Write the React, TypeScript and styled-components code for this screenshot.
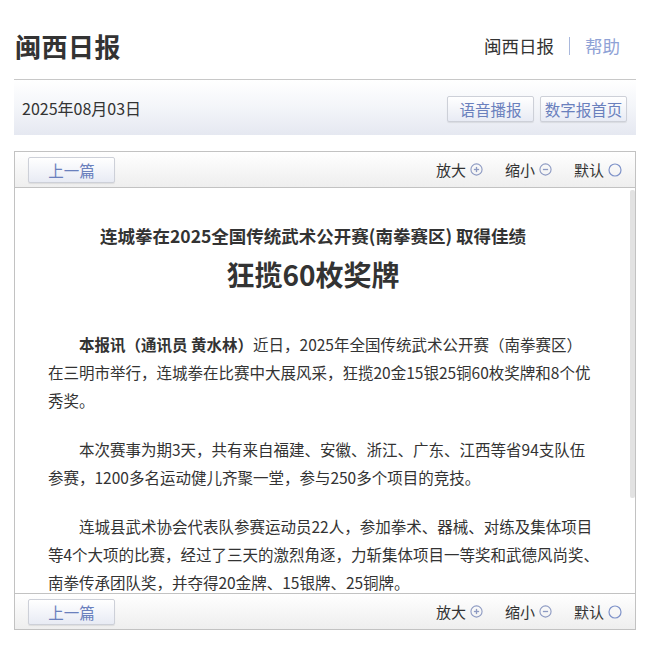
import React from 'react';
import styled, { createGlobalStyle } from 'styled-components';

const GlobalStyle = createGlobalStyle`
  body {
    margin: 0;
    padding: 0;
    background: #fff;
    color: #333;
    font-family: "Noto Sans CJK SC", "Noto Sans", sans-serif;
  }
`;

const Page = styled.div`
  width: 622px;
  margin-left: 14px;
`;

const Header = styled.div`
  height: 67px;
  padding-top: 12px;
  display: flex;
  align-items: center;
  justify-content: space-between;
  border-bottom: 1px solid #c8c8c8;
  box-sizing: content-box;
`;

const Logo = styled.h1`
  margin: 0 0 0 1px;
  font-size: 26px;
  font-weight: 700;
  color: #333;
  letter-spacing: 0.5px;
`;

const TopLinks = styled.div`
  display: flex;
  align-items: center;
  padding-right: 16px;
  font-size: 17.5px;
`;

const TopLink = styled.a<{ $muted?: boolean }>`
  color: ${p => (p.$muted ? '#8fa2d6' : '#333')};
  text-decoration: none;
  cursor: pointer;
`;

const Divider = styled.span`
  width: 1px;
  height: 18px;
  background: #a9b8dc;
  margin: 0 15px;
`;

const DateBar = styled.div`
  height: 55px;
  display: flex;
  align-items: center;
  justify-content: space-between;
  padding: 0 9px 0 8px;
  background: linear-gradient(to bottom, #ffffff 0%, #f3f5f9 50%, #e5e8f1 100%);
`;

const DateText = styled.span`
  font-size: 16px;
  color: #333;
`;

const BtnGroup = styled.div`
  display: flex;
  gap: 6px;
  padding-top: 2px;
`;

const Button = styled.button`
  width: 87px;
  height: 26px;
  padding: 0;
  border: 1px solid #cdd0d8;
  border-radius: 2px;
  background: linear-gradient(to bottom, #ffffff, #e8ebf4);
  box-shadow: 0 1px 1px rgba(0, 0, 0, 0.08);
  color: #6a80bd;
  font-family: inherit;
  font-size: 15.5px;
  line-height: 24px;
  cursor: pointer;
`;

const Article = styled.div`
  margin-top: 16px;
  border: 1px solid #c2c2c2;
  background: #fff;
`;

const Toolbar = styled.div<{ $bottom?: boolean }>`
  height: 35px;
  display: flex;
  align-items: center;
  justify-content: space-between;
  padding: 0 13px;
  background: linear-gradient(to bottom, #ffffff, #eeeeee);
  ${p => (p.$bottom ? 'border-top: 1px solid #c2c2c2;' : 'border-bottom: 1px solid #c2c2c2;')}
`;

const Zoomers = styled.div`
  display: flex;
  align-items: center;
  gap: 22px;
  font-size: 15px;
  color: #333;
`;

const ZoomItem = styled.span`
  display: flex;
  align-items: center;
  gap: 4px;
  cursor: pointer;
`;

const ScrollArea = styled.div`
  height: 405px;
  display: flex;
`;

const Viewport = styled.div`
  flex: 1;
  overflow-y: auto;
  scrollbar-width: none;
  &::-webkit-scrollbar {
    display: none;
  }
`;

const Track = styled.div`
  width: 6px;
  padding: 2px 0 0 1px;
  box-sizing: border-box;
`;

const Thumb = styled.div`
  width: 5px;
  height: 308px;
  background: #e2e2e2;
  border-radius: 2px;
`;

const Content = styled.div`
  padding: 33px 22px 110px 33px;
`;

const TitleBlock = styled.div`
  text-align: center;
  padding-right: 29px;
  color: #333;
`;

const SubTitle = styled.h3`
  margin: 0;
  font-size: 17.5px;
  line-height: 30px;
  font-weight: 700;
`;

const MainTitle = styled.h2`
  margin: 3px 0 0;
  font-size: 28px;
  line-height: 40px;
  font-weight: 700;
`;

const Body = styled.div`
  margin-top: 36px;
`;

const Para = styled.p`
  margin: 0 0 21px;
  font-size: 15.5px;
  line-height: 28px;
  text-indent: 2em;
  color: #333;
`;

// line breaks as printed on the page
const paragraphs: React.ReactNode[][] = [
  [
    <><b>本报讯（通讯员 黄水林）</b>近日，2025年全国传统武术公开赛（南拳赛区）</>,
    '在三明市举行，连城拳在比赛中大展风采，狂揽20金15银25铜60枚奖牌和8个优',
    '秀奖。',
  ],
  [
    '本次赛事为期3天，共有来自福建、安徽、浙江、广东、江西等省94支队伍',
    '参赛，1200多名运动健儿齐聚一堂，参与250多个项目的竞技。',
  ],
  [
    '连城县武术协会代表队参赛运动员22人，参加拳术、器械、对练及集体项目',
    '等4个大项的比赛，经过了三天的激烈角逐，力斩集体项目一等奖和武德风尚奖、',
    '南拳传承团队奖，并夺得20金牌、15银牌、25铜牌。',
  ],
];

const Circle = ({ kind }: { kind: 'plus' | 'minus' | 'none' }) => (
  <svg width={kind === 'none' ? 14 : 13} height={kind === 'none' ? 14 : 13} viewBox="0 0 14 14">
    <circle cx="7" cy="7" r="6" fill="none" stroke={kind === 'none' ? '#7f93c9' : '#8d9ac2'} strokeWidth="1.2" />
    {kind !== 'none' && <line x1="4.2" y1="7" x2="9.8" y2="7" stroke="#8d9ac2" strokeWidth="1.4" />}
    {kind === 'plus' && <line x1="7" y1="4.2" x2="7" y2="9.8" stroke="#8d9ac2" strokeWidth="1.4" />}
  </svg>
);

const ArticleBar = ({ bottom }: { bottom?: boolean }) => (
  <Toolbar $bottom={bottom}>
    <Button>上一篇</Button>
    <Zoomers>
      <ZoomItem>放大<Circle kind="plus" /></ZoomItem>
      <ZoomItem>缩小<Circle kind="minus" /></ZoomItem>
      <ZoomItem>默认<Circle kind="none" /></ZoomItem>
    </Zoomers>
  </Toolbar>
);

function App() {
  return (
    <>
      <GlobalStyle />
      <Page>
        <Header>
          <Logo>闽西日报</Logo>
          <TopLinks>
            <TopLink>闽西日报</TopLink>
            <Divider />
            <TopLink $muted>帮助</TopLink>
          </TopLinks>
        </Header>
        <DateBar>
          <DateText>2025年08月03日</DateText>
          <BtnGroup>
            <Button>语音播报</Button>
            <Button>数字报首页</Button>
          </BtnGroup>
        </DateBar>
        <Article>
          <ArticleBar />
          <ScrollArea>
            <Viewport>
              <Content>
                <TitleBlock>
                  <SubTitle>连城拳在2025全国传统武术公开赛(南拳赛区) 取得佳绩</SubTitle>
                  <MainTitle>狂揽60枚奖牌</MainTitle>
                </TitleBlock>
                <Body>
                  {paragraphs.map((lines, i) => (
                    <Para key={i}>
                      {lines.map((line, j) => (
                        <React.Fragment key={j}>
                          {j > 0 && <br />}
                          {line}
                        </React.Fragment>
                      ))}
                    </Para>
                  ))}
                </Body>
              </Content>
            </Viewport>
            <Track>
              <Thumb />
            </Track>
          </ScrollArea>
          <ArticleBar bottom />
        </Article>
      </Page>
    </>
  );
}

export default App;
